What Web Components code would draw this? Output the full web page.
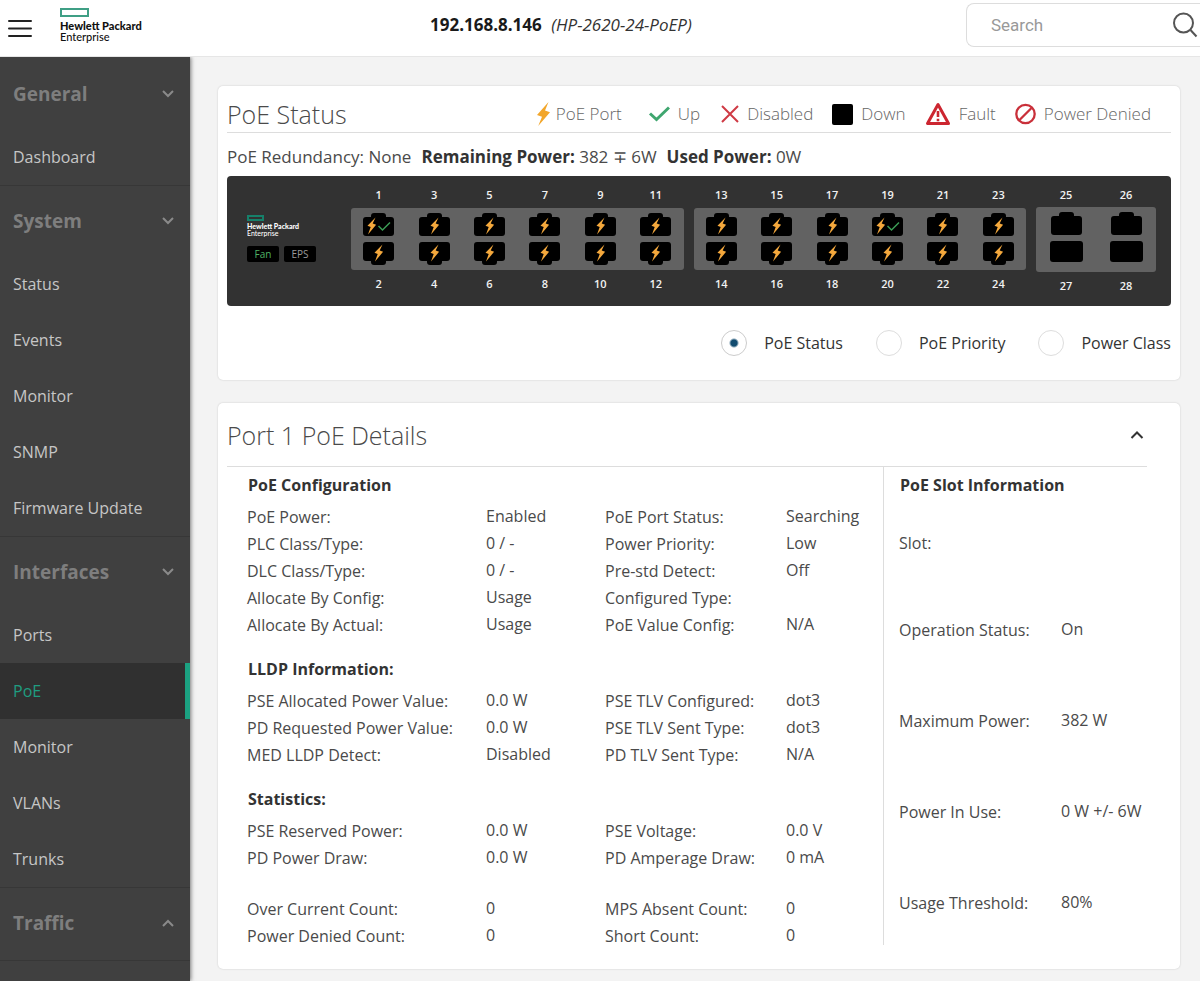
<!DOCTYPE html>
<html lang="en">
<head>
<meta charset="utf-8">
<meta name="viewport" content="width=device-width, initial-scale=1">
<title>PoE Status</title>
<style>
  body { margin: 0; background: #f3f3f3; color: #4a4a4a; font: 16px/24px "Open Sans", "Noto Sans", sans-serif; }
</style>
</head>
<body>
<switch-app></switch-app>

<script>
const define = (name, html, setup) => {
  const template = document.createElement('template');
  template.innerHTML = html;
  customElements.define(name, class extends HTMLElement {
    connectedCallback() {
      if (this.shadowRoot) return;
      this.attachShadow({ mode: 'open' }).append(template.content.cloneNode(true));
      if (setup) setup(this, this.shadowRoot);
    }
  });
};

/* Brand mark: green frame over two lines of text */
define('hpe-logo', `
<style>
  :host { display: block; font: 900 11px/11px Lato, sans-serif; color: #111; }
  i { display: block; box-sizing: border-box; width: 29px; height: 9px; border: 2px solid #3f9f85; margin-bottom: 3px; }
  span { display: block; white-space: nowrap; }
  .sub { font-weight: 500; }
  :host([small]) { font-size: 7px; line-height: 7px; color: #fff; }
  :host([small]) i { width: 17px; height: 6px; border-color: #16806a; margin-bottom: 2px; }
</style>
<i></i><span>Hewlett Packard</span><span class="sub">Enterprise</span>`);

define('app-header', `
<style>
  :host { display: flex; align-items: center; height: 56px; background: #fff; border-bottom: 1px solid #e6e6e6; position: relative; z-index: 2; }
  button { border: 0; background: none; padding: 0; display: block; }
  .menu { margin: 0 28px 0 8px; }
  hpe-logo { margin-bottom: 6px; }
  h1 { flex: 1; margin: 0 0 6px; padding-left: 14px; text-align: center; font-size: 17px; line-height: 24px; color: #1a1a1a; }
  h1 em { font-weight: 400; margin-left: 5px; color: #333; }
  form { box-sizing: border-box; display: flex; align-items: center; width: 234px; height: 44px; margin-bottom: 6px; border: 1px solid #ddd; border-right: 0; border-radius: 8px 0 0 8px; overflow: hidden; }
  input { flex: 1; min-width: 0; border: 0; outline: 0; padding: 0 0 0 24px; font: 17px/24px Roboto, sans-serif; background: none; }
  input::placeholder { color: #999; opacity: 1; }
  svg { display: block; }
</style>
<button class="menu" type="button" aria-label="Menu">
  <svg width="24" height="20" viewBox="0 0 24 20" stroke="#222" stroke-width="2" stroke-linecap="round"><path d="M1 3h22M1 10.500h22M1 18h22"/></svg>
</button>
<hpe-logo></hpe-logo>
<h1>192.168.8.146 <em>(HP-2620-24-PoEP)</em></h1>
<form role="search">
  <input type="search" placeholder="Search" aria-label="Search">
  <button type="button" aria-label="Run search">
    <svg width="27" height="26" viewBox="0 0 27 26" fill="none" stroke="#555" stroke-width="2"><circle cx="10.500" cy="11" r="9.500"/><path d="M17.500 18l6 6.500"/></svg>
  </button>
</form>`);

define('nav-section', `
<style>
  :host { display: block; border-top: 1px solid #373737; }
  button { box-sizing: border-box; width: 100%; height: 70px; padding: 0 15px 0 13px; border: 0; background: none; display: flex; align-items: center; justify-content: space-between; font: 700 19px/26px "Open Sans", sans-serif; color: #7e7e7e; }
  :host([collapsed]) { padding-bottom: 2px; border-bottom: 1px solid #373737; }
  :host([collapsed]) svg { transform: rotate(180deg); }
</style>
<button type="button"><span></span><svg width="14" height="10" viewBox="0 0 14 10" fill="none" stroke="#8a8a8a" stroke-width="2"><path d="M2 2l5 5 5-5"/></svg></button>
<slot></slot>`, (el, root) => {
  root.querySelector('span').textContent = el.getAttribute('heading');
  root.querySelector('button').setAttribute('aria-expanded', String(!el.hasAttribute('collapsed')));
});

define('nav-item', `
<style>
  :host { display: block; }
  a { box-sizing: border-box; display: flex; align-items: center; height: 56px; padding-left: 13px; color: #c6c6c6; text-decoration: none; font-size: 16px; }
  :host([current]) a { background: #303030; color: #1f9d80; border-right: 5px solid #1ba181; }
</style>
<a href="#"><slot></slot></a>`, (el, root) => {
  if (el.hasAttribute('current')) root.querySelector('a').setAttribute('aria-current', 'page');
});

define('side-nav', `
<style>
  :host { display: block; background: #404040; border-top: 1px solid #404040; box-shadow: 1px 0 4px rgba(0,0,0,.5); }
  nav-section:first-child { border-top-color: transparent; }
</style>
<nav>
  <nav-section heading="General"><nav-item>Dashboard</nav-item></nav-section>
  <nav-section heading="System">
    <nav-item>Status</nav-item><nav-item>Events</nav-item><nav-item>Monitor</nav-item><nav-item>SNMP</nav-item><nav-item>Firmware Update</nav-item>
  </nav-section>
  <nav-section heading="Interfaces">
    <nav-item>Ports</nav-item><nav-item current>PoE</nav-item><nav-item>Monitor</nav-item><nav-item>VLANs</nav-item><nav-item>Trunks</nav-item>
  </nav-section>
  <nav-section heading="Traffic" collapsed></nav-section>
</nav>`);

define('content-card', `
<style>
  :host { display: block; background: #fff; border-radius: 5px; box-shadow: 0 0 2px rgba(0,0,0,.18); padding: 0 9px; }
</style>
<slot></slot>`);

define('status-legend', `
<style>
  :host { display: block; }
  ul { display: flex; gap: 19px; list-style: none; margin: 0; padding: 0 20px 0 0; font-weight: 300; font-size: 17px; line-height: 24px; color: #666; }
  li { display: flex; align-items: center; gap: 8px; white-space: nowrap; }
  li:first-child { gap: 6px; }
  svg { display: block; flex: none; }
</style>
<ul>
  <li><svg width="13" height="24" viewBox="0 0 13 24" fill="#f2a62b"><path d="M11.500 0L0 13l5 1.800L1.200 24 13 10.200 8 8.400z"/></svg>PoE Port</li>
  <li><svg width="29" height="16" viewBox="0 0 29 16" fill="none" stroke="#3fa66f" stroke-width="3"><path d="M9 7.500l6.500 6L28 1.500"/></svg>Up</li>
  <li><svg width="20" height="18" viewBox="0 0 20 18" fill="none" stroke="#cf3a44" stroke-width="2"><path d="M3 1l16 16M19 1L3 17"/></svg>Disabled</li>
  <li><svg width="21" height="21" viewBox="0 0 21 21"><rect width="21" height="21" rx="2"/></svg>Down</li>
  <li><svg width="26" height="24" viewBox="0 0 26 24" fill="none" stroke="#cc2630" stroke-width="3" stroke-linejoin="round"><path d="M13 2.500L2.500 21.500h21z"/><path stroke-width="2.600" d="M13 9v6M13 16.700v2.500"/></svg>Fault</li>
  <li><svg width="21" height="22" viewBox="0 0 21 22" fill="none" stroke="#c9303a" stroke-width="2.300"><circle cx="10.500" cy="11" r="9.200"/><path d="M4.500 17L16.500 5"/></svg>Power Denied</li>
</ul>`);

/* One bank of ports: odd numbers over a plate, even numbers under it */
define('port-bank', `
<style>
  :host { display: block; color: #f2f2f2; font-size: 11px; font-weight: 600; line-height: 16px; }
  .row { display: grid; grid-auto-flow: column; grid-auto-columns: 1fr; justify-items: center; }
  .plate { background: #626262; border-radius: 3px; padding: 5px 0; display: grid; row-gap: 6px; margin: 5px 0 6px; }
  :host([plain]) .plate { padding-bottom: 8px; margin-top: 4px; }
  svg { display: block; }
</style>
<div class="row top"></div>
<div class="plate"><div class="row jacks-top"></div><div class="row jacks-bottom"></div></div>
<div class="row bottom"></div>`, (el, root) => {
  const up = (el.getAttribute('up') || '').split(',');
  const plain = el.hasAttribute('plain');
  const bolt = x => `<path fill="#f4a83c" d="M${x + 4} 4.500L${x - 4} 12.800l3.200 1.200L${x - 3.500} 21.500 ${x + 4.600} 11.800 ${x + 1.200} 10.600z"/>`;
  const jack = (n, lower) => {
    let body;
    if (plain && lower) body = '<rect x="0" y="0" width="33" height="21" rx="3"/>';
    else body = `<g${lower ? ' transform="matrix(1 0 0 -1 0 23)"' : ''}><rect x="1" y="4" width="31" height="19" rx="3"/><rect x="9" y="0" width="15" height="8" rx="3"/></g>`;
    let marks = '';
    if (!plain) {
      const on = up.includes(n);
      marks = `<g${lower ? ' transform="translate(0 -2)"' : ''}>${bolt(on ? 9.500 : 16.500)}</g>`;
      if (on) marks += '<path fill="none" stroke="#3b9c55" stroke-width="1.500" d="M16.500 13l4 4 7.500-7.500"/>';
    }
    const state = up.includes(n) ? 'up' : 'down';
    return `<svg role="img" aria-label="Port ${n} ${state}" width="33" height="23" viewBox="0 0 33 23">${body}${marks}</svg>`;
  };
  const fill = (numbers, labels, jacks, lower) => {
    root.querySelector(labels).innerHTML = numbers.map(n => `<span>${n}</span>`).join('');
    root.querySelector(jacks).innerHTML = numbers.map(n => jack(n, lower)).join('');
  };
  fill(el.getAttribute('upper').split(','), '.top', '.jacks-top', false);
  fill(el.getAttribute('lower').split(','), '.bottom', '.jacks-bottom', true);
});

define('switch-front', `
<style>
  :host { display: grid; grid-template-columns: 94fr 333fr 333fr 120fr; column-gap: 10px; align-items: start; box-sizing: border-box; height: 130px; padding: 11px 15px 0 20px; background: #323232; border-radius: 4px; }
  .badges { display: flex; gap: 5px; margin-top: 9px; }
  .badges span { width: 32px; border-radius: 2px; background: #000; color: #999; font-size: 10px; line-height: 16px; text-align: center; }
  .badges .on { color: #4fb364; }
  .brand { padding-top: 28px; }
</style>
<div class="brand"><hpe-logo small></hpe-logo><div class="badges"><span class="on">Fan</span><span>EPS</span></div></div>
<port-bank upper="1,3,5,7,9,11" lower="2,4,6,8,10,12" up="1"></port-bank>
<port-bank upper="13,15,17,19,21,23" lower="14,16,18,20,22,24" up="19"></port-bank>
<port-bank plain upper="25,26" lower="27,28"></port-bank>`);

define('view-switch', `
<style>
  :host { display: flex; align-items: center; justify-content: flex-end; height: 74px; gap: 33px; color: #333; }
  label { display: flex; align-items: center; gap: 17px; }
  input { appearance: none; box-sizing: border-box; width: 26px; height: 26px; margin: 0; border: 1px solid #ddd; border-radius: 50%; background: #fff; }
  input:checked { border-color: #ccc; background: radial-gradient(circle, #124c70 3px, transparent 5px); }
</style>
<label><input type="radio" name="view" checked>PoE Status</label>
<label><input type="radio" name="view">PoE Priority</label>
<label><input type="radio" name="view">Power Class</label>`);

define('poe-status', `
<style>
  :host { display: block; }
  header { box-sizing: border-box; height: 47px; padding-top: 10px; border-bottom: 1px solid #ddd; display: flex; align-items: center; justify-content: space-between; }
  h2 { margin: 0; font-size: 25px; line-height: 34px; font-weight: 300; color: #4a4a4a; }
  p { box-sizing: border-box; margin: 0; height: 43px; padding-top: 12px; display: flex; gap: 10px; font-size: 17px; }
  b { color: #333; }
</style>
<content-card>
  <header><h2>PoE Status</h2><status-legend></status-legend></header>
  <p><span>PoE Redundancy: None</span><span><b>Remaining Power:</b> 382 ∓ 6W</span><span><b>Used Power:</b> 0W</span></p>
  <switch-front></switch-front>
  <view-switch></view-switch>
</content-card>`);

/* Label and value pairs, two pairs to a line; data is "label|value" split by ";" */
define('detail-group', `
<style>
  :host { display: block; line-height: 27px; }
  h3 { margin: 0 0 5px 1px; font-size: 16px; line-height: 27px; font-weight: 700; color: #333; }
  dl { margin: 0; display: grid; grid-template-columns: 239fr 119fr 181fr 97fr; grid-auto-rows: 27px; white-space: nowrap; }
  dt, dd { margin: 0; min-width: 0; }
  dd { line-height: 25px; }
</style>
<h3></h3><dl></dl>`, (el, root) => {
  const title = root.querySelector('h3');
  if (el.hasAttribute('heading')) title.textContent = el.getAttribute('heading');
  else title.remove();
  root.querySelector('dl').innerHTML = el.getAttribute('data').split(';')
    .map(pair => pair.split('|')).map(([k, v]) => `<dt>${k}</dt><dd>${v}</dd>`).join('');
});

define('poe-details', `
<style>
  :host { display: block; }
  header { box-sizing: border-box; height: 64px; margin-right: 24px; padding: 0 2px 0 0; border-bottom: 1px solid #ddd; display: flex; align-items: center; justify-content: space-between; }
  h2 { margin: 0; font-size: 25px; line-height: 34px; font-weight: 300; color: #4a4a4a; }
  button { border: 0; padding: 0; background: none; }
  svg { display: block; }
  .body { display: grid; grid-template-columns: 656fr 288fr; align-items: start; padding-bottom: 19px; }
  .groups { display: grid; row-gap: 17px; padding: 5px 0 0 20px; }
  .counts { margin-top: 7px; }
  .slot { border-left: 1px solid #ddd; padding: 5px 0 28px 15px; }
  .slot h3 { margin: 0 0 31px 1px; font-size: 16px; line-height: 27px; color: #333; }
  .slot dl { margin: 0; display: grid; grid-template-columns: 162fr 110fr; grid-template-rows: 87px 91px 91px 91px 27px; line-height: 27px; white-space: nowrap; }
  dt, dd { margin: 0; }
  dd { line-height: 25px; }
</style>
<content-card>
  <header><h2>Port 1 PoE Details</h2>
    <button type="button" aria-label="Collapse"><svg width="16" height="12" viewBox="0 0 16 12" fill="none" stroke="#333" stroke-width="2"><path d="M2.500 9L8 3.500 13.500 9"/></svg></button>
  </header>
  <div class="body">
    <div class="groups">
      <detail-group heading="PoE Configuration" data="PoE Power:|Enabled;PoE Port Status:|Searching;PLC Class/Type:|0 / -;Power Priority:|Low;DLC Class/Type:|0 / -;Pre-std Detect:|Off;Allocate By Config:|Usage;Configured Type:|;Allocate By Actual:|Usage;PoE Value Config:|N/A"></detail-group>
      <detail-group heading="LLDP Information:" data="PSE Allocated Power Value:|0.0 W;PSE TLV Configured:|dot3;PD Requested Power Value:|0.0 W;PSE TLV Sent Type:|dot3;MED LLDP Detect:|Disabled;PD TLV Sent Type:|N/A"></detail-group>
      <detail-group heading="Statistics:" data="PSE Reserved Power:|0.0 W;PSE Voltage:|0.0 V;PD Power Draw:|0.0 W;PD Amperage Draw:|0 mA"></detail-group>
      <detail-group class="counts" data="Over Current Count:|0;MPS Absent Count:|0;Power Denied Count:|0;Short Count:|0"></detail-group>
    </div>
    <section class="slot">
      <h3>PoE Slot Information</h3>
      <dl>
        <dt>Slot:</dt><dd></dd>
        <dt>Operation Status:</dt><dd>On</dd>
        <dt>Maximum Power:</dt><dd>382 W</dd>
        <dt>Power In Use:</dt><dd>0 W +/- 6W</dd>
        <dt>Usage Threshold:</dt><dd>80%</dd>
      </dl>
    </section>
  </div>
</content-card>`);

define('switch-app', `
<style>
  :host { display: flex; flex-direction: column; min-height: 100vh; }
  .columns { flex: 1; display: flex; }
  side-nav { flex: none; width: 190px; }
  main { flex: 1; min-width: 0; padding: 29px 20px 11px 28px; display: flex; flex-direction: column; gap: 23px; }
</style>
<app-header></app-header>
<div class="columns">
  <side-nav></side-nav>
  <main><poe-status></poe-status><poe-details></poe-details></main>
</div>`);
</script>
</body>
</html>
